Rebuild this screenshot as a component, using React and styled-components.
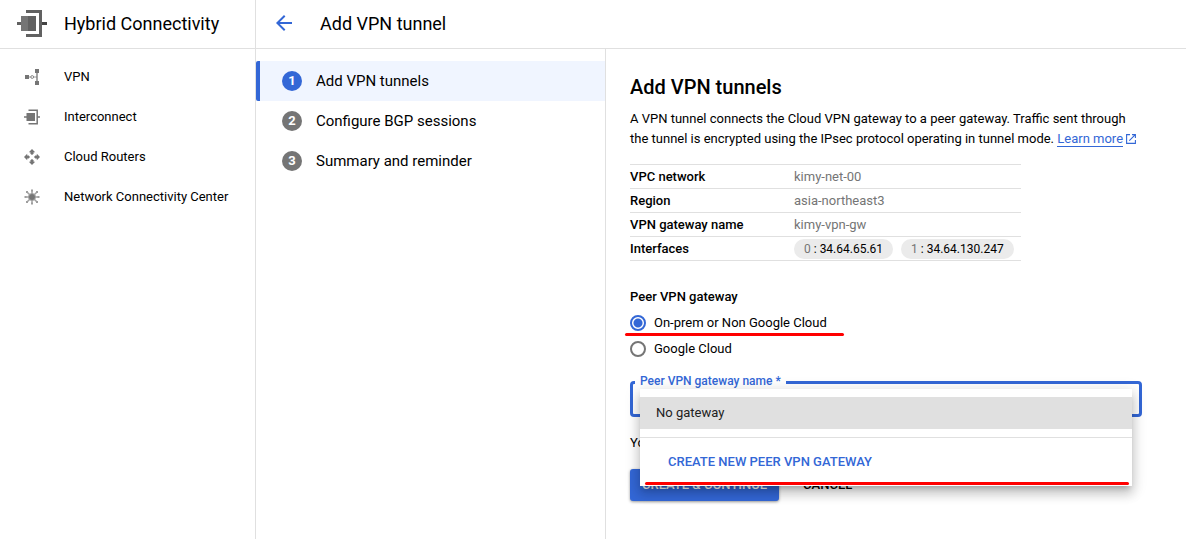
import React, { useState } from "react";
import styled, { createGlobalStyle, css } from "styled-components";

const color = {
  blue: "#3367d6",
  grey: "#757575",
  line: "#e0e0e0",
  text: "#000",
  option: "#212121",
  mark: "#ff0000",
};

const GlobalStyle = createGlobalStyle`
  *, *::before, *::after { box-sizing: border-box; }
  body {
    margin: 0;
    background: #fff;
    color: #000;
    font-family: Roboto, "Liberation Sans", sans-serif;
    font-size: 13px;
    line-height: 20px;
  }
  button, select, input { font: inherit; margin: 0; }
  h1, h2, p, ul, ol { margin: 0; padding: 0; }
  ul, ol { list-style: none; }
`;

const Page = styled.div`
  display: flex;
  min-height: 100vh;
`;

const Sidebar = styled.aside`
  flex: 0 0 256px;
  border-right: 1px solid ${color.line};
`;

const Content = styled.div`
  flex: 1;
  min-width: 0;
  display: flex;
  flex-direction: column;
`;

const Bar = styled.header`
  display: flex;
  align-items: center;
  gap: ${(p) => p.$gap}px;
  height: 49px;
  padding: 0 16px;
  border-bottom: 1px solid ${color.line};
`;

const BarTitle = styled.h1`
  font-size: 18px;
  font-weight: 400;
  line-height: 24px;
`;

const BackButton = styled.button`
  display: flex;
  padding: 0 0 2px;
  border: 0;
  background: none;
  color: ${color.blue};
  cursor: pointer;
`;

const NavList = styled.ul`
  && { padding-top: 8px; }
`;

const NavLink = styled.a`
  display: flex;
  align-items: center;
  gap: 24px;
  height: 40px;
  padding: 0 24px;
  color: ${color.text};
  text-decoration: none;
`;

const Body = styled.div`
  flex: 1;
  display: flex;
`;

const Steps = styled.ol`
  flex: 0 0 350px;
  && { padding-top: 12px; }
  border-right: 1px solid ${color.line};
`;

const StepButton = styled.button`
  display: flex;
  align-items: center;
  gap: 14px;
  width: 100%;
  height: 40px;
  padding: 0 22px;
  border: 0;
  border-left: 4px solid transparent;
  border-radius: 2px 0 0 2px;
  background: none;
  color: ${color.text};
  font-size: 15px;
  text-align: left;
  ${(p) =>
    p.$active &&
    css`
      border-left-color: ${color.blue};
      background: #f0f5ff;
    `}
`;

const StepNumber = styled.span`
  width: 20px;
  height: 20px;
  border-radius: 50%;
  background: ${(p) => (p.$active ? color.blue : color.grey)};
  color: #fff;
  font-size: 13px;
  font-weight: 700;
  line-height: 20px;
  text-align: center;
`;

const Main = styled.main`
  flex: 1;
  min-width: 0;
  padding: 24px;
`;

const Form = styled.form`
  max-width: 512px;
`;

const Heading = styled.h2`
  font-size: 20px;
  font-weight: 500;
  line-height: 28px;
`;

const Intro = styled.p`
  && { margin: 8px 0 15px; }
  color: ${color.text};
`;

const LearnLink = styled.a`
  margin-right: 3px;
  border-bottom: 1px solid ${color.blue};
  color: ${color.blue};
  text-decoration: none;
  white-space: nowrap;
`;

const ExternalGlyph = styled.svg`
  color: ${color.blue};
  vertical-align: -1px;
`;

const Details = styled.table`
  width: 100%;
  max-width: 391px;
  border-collapse: collapse;
  border-top: 1px solid ${color.line};

  tr { border-bottom: 1px solid ${color.line}; }
  th, td { height: 24px; padding: 0; text-align: left; line-height: 20px; }
  th { width: 164px; font-weight: 500; }
  td { color: ${color.grey}; }
`;

const Chips = styled.div`
  display: flex;
  gap: 8px;
`;

const Chip = styled.span`
  padding: 0 10px;
  border-radius: 10px;
  background: #ebebeb;
  font-size: 12px;
  line-height: 20px;
  white-space: nowrap;

  b { color: #000; font-weight: 400; }
`;

const Group = styled.fieldset`
  margin: 26px 0 0;
  padding: 0;
  border: 0;
`;

const Legend = styled.legend`
  padding: 0;
  font-weight: 500;
`;

const RadioRow = styled.div`
  position: relative;
  width: max-content;
  margin-top: 6px;
`;

const RadioLabel = styled.label`
  display: flex;
  align-items: center;
  gap: 8px;
  color: ${color.text};
`;

const Radio = styled.input`
  appearance: none;
  width: 16px;
  height: 16px;
  border: 2px solid ${color.grey};
  border-radius: 50%;

  &:checked {
    border-color: ${color.blue};
    background: radial-gradient(circle, ${color.blue} 4px, transparent 5px);
  }
`;

const RadioMark = styled.span`
  position: absolute;
  right: -17px;
  bottom: -3px;
  left: -5px;
  height: 3px;
  border-radius: 2px;
  background: ${color.mark};
`;

const Field = styled.div`
  position: relative;
  margin-top: 22px;
`;

const FieldLabel = styled.label`
  position: absolute;
  top: -10px;
  left: 5px;
  padding: 0 5px;
  background: #fff;
  color: ${color.blue};
  font-size: 12px;
  font-weight: 500;
`;

const Select = styled.select`
  display: block;
  appearance: none;
  width: 100%;
  height: 36px;
  padding: 0 12px;
  border: 3px solid ${color.blue};
  border-radius: 4px;
  background: #fff;
  outline: 0;
`;

const Menu = styled.div`
  position: absolute;
  z-index: 1;
  top: 8px;
  right: 10px;
  left: 10px;
  padding-top: 8px;
  background: #fff;
  box-shadow: 0 5px 5px -3px rgba(0, 0, 0, 0.2),
    0 8px 10px 1px rgba(0, 0, 0, 0.14), 0 3px 14px 2px rgba(0, 0, 0, 0.12);
`;

const Option = styled.button`
  display: block;
  width: 100%;
  height: 32px;
  padding: 0 16px;
  border: 0;
  background: #e0e0e0;
  color: ${color.option};
  text-align: left;
`;

const CreateOption = styled.button`
  display: block;
  width: 100%;
  height: 49px;
  margin-top: 8px;
  padding: 0 28px;
  border: 0;
  border-top: 1px solid ${color.line};
  background: #fff;
  color: ${color.blue};
  font-weight: 500;
  text-align: left;
`;

const MenuMark = styled.span`
  position: absolute;
  right: 3px;
  bottom: 1px;
  left: 5px;
  height: 3px;
  border-radius: 2px;
  background: ${color.mark};
`;

const Hint = styled.p`
  && { margin: 16px 0; }
  color: ${color.text};
`;

const Actions = styled.div`
  display: flex;
  gap: 8px;
`;

const Button = styled.button`
  height: 32px;
  padding: 0 ${(p) => (p.$primary ? 12 : 16)}px;
  border: 0;
  border-radius: 3px;
  background: none;
  color: #000;
  font-weight: 500;
  ${(p) =>
    p.$primary &&
    css`
      background: ${color.blue};
      color: #fff;
      box-shadow: 0 1px 3px rgba(0, 0, 0, 0.4);
    `}
`;

const ProductIcon = () => (
  <svg width="32" height="32" viewBox="0 0 32 32" aria-hidden="true">
    <path fill="#616161" d="M10 2h16v27H10v-3h13V5H10z" />
    <path fill="#757575" d="M5 8h8v15H5z" />
    <path fill="#616161" d="M12 8h8v15h-8zM1 14h4v3H1z" />
    <path fill="#424242" d="M26 14h5v3h-5z" />
  </svg>
);

const VpnIcon = () => (
  <svg width="16" height="16" viewBox="0 0 16 16" aria-hidden="true">
    <path fill="#757575" d="M1 6h4v4H1zM11 0h4v4h-4zM11 12h4v4h-4z" />
    <path fill="none" stroke="#9e9e9e" d="M5 8h2M9.500 8H13" />
    <path fill="none" stroke="#757575" strokeWidth="1.300" d="M13 4v8" />
    <circle cx="8.200" cy="8" r="1.400" fill="#fff" stroke="#858585" />
  </svg>
);

const InterconnectIcon = () => (
  <svg width="16" height="16" viewBox="0 0 16 16" aria-hidden="true">
    <path fill="#757575" d="M2.500 4H11v8H2.500zM0 7.300h3v1.400H0zM13 7.300h3v1.400h-3z" />
    <path fill="none" stroke="#757575" strokeWidth="1.500" d="M4.500 1.200h8.700v13.500H4.500" />
  </svg>
);

const RoutersIcon = () => (
  <svg width="16" height="16" viewBox="0 0 16 16" aria-hidden="true">
    <g fill="#757575">
      {[0, 90, 180, 270].map((angle) => (
        <path
          key={angle}
          transform={`rotate(${angle} 8 8)`}
          d="M8 0l3.200 3.200H9.600v1.500L8 6 6.400 4.700V3.200H4.800z"
        />
      ))}
    </g>
  </svg>
);

const CenterIcon = () => (
  <svg width="16" height="16" viewBox="0 0 16 16" aria-hidden="true">
    <g stroke="#a3a3a3" strokeWidth="1.500">
      <path d="M8 1v14M1 8h14M3 3l10 10M13 3L3 13" />
    </g>
    <g fill="#9e9e9e">
      <path d="M7 0.500h2v2H7zM7 13.500h2v2H7zM.5 7h2v2h-2zM13.500 7h2v2h-2z" />
      <path d="M2 2h2v2H2zM12 2h2v2h-2zM2 12h2v2H2zM12 12h2v2h-2z" />
    </g>
    <circle cx="8" cy="8" r="3.500" fill="#757575" stroke="#a3a3a3" />
  </svg>
);

const BackIcon = () => (
  <svg width="24" height="24" viewBox="0 0 24 24" aria-hidden="true">
    <path fill="currentColor" d="M20 11H7.830l5.590-5.590L12 4l-8 8 8 8 1.410-1.410L7.830 13H20z" />
  </svg>
);

const ExternalIcon = () => (
  <ExternalGlyph width="10" height="10" viewBox="0 0 10 10" aria-hidden="true">
    <path fill="none" stroke="currentColor" strokeWidth="1.100" d="M4 .6H.6v8.800h8.800V6M6 .6h3.400V4M9.300.7L3.300 6.700" />
  </ExternalGlyph>
);

const navItems = [
  ["VPN", VpnIcon],
  ["Interconnect", InterconnectIcon],
  ["Cloud Routers", RoutersIcon],
  ["Network Connectivity Center", CenterIcon],
];

const steps = ["Add VPN tunnels", "Configure BGP sessions", "Summary and reminder"];

const details = [
  ["VPC network", "kimy-net-00"],
  ["Region", "asia-northeast3"],
  ["VPN gateway name", "kimy-vpn-gw"],
];

const interfaces = ["34.64.65.61", "34.64.130.247"];

const peerTypes = ["On-prem or Non Google Cloud", "Google Cloud"];

export default function App() {
  const [peerType, setPeerType] = useState(peerTypes[0]);

  return (
    <>
      <GlobalStyle />
      <Page>
        <Sidebar>
          <Bar as="div" $gap={16}>
            <ProductIcon />
            <BarTitle as="div">Hybrid Connectivity</BarTitle>
          </Bar>
          <nav>
            <NavList>
              {navItems.map(([name, Icon]) => (
                <li key={name}>
                  <NavLink href="#">
                    <Icon />
                    {name}
                  </NavLink>
                </li>
              ))}
            </NavList>
          </nav>
        </Sidebar>
        <Content>
          <Bar $gap={24}>
            <BackButton type="button" aria-label="Back">
              <BackIcon />
            </BackButton>
            <BarTitle>Add VPN tunnel</BarTitle>
          </Bar>
          <Body>
            <Steps>
              {steps.map((name, i) => (
                <li key={name}>
                  <StepButton type="button" $active={i === 0}>
                    <StepNumber $active={i === 0}>{i + 1}</StepNumber>
                    {name}
                  </StepButton>
                </li>
              ))}
            </Steps>
            <Main>
              <Form onSubmit={(e) => e.preventDefault()}>
                <Heading>Add VPN tunnels</Heading>
                <Intro>
                  A VPN tunnel connects the Cloud VPN gateway to a peer gateway. Traffic sent
                  through the tunnel is encrypted using the IPsec protocol operating in tunnel
                  mode. <LearnLink href="#">Learn more</LearnLink>
                  <ExternalIcon />
                </Intro>
                <Details>
                  <tbody>
                    {details.map(([name, value]) => (
                      <tr key={name}>
                        <th scope="row">{name}</th>
                        <td>{value}</td>
                      </tr>
                    ))}
                    <tr>
                      <th scope="row">Interfaces</th>
                      <td>
                        <Chips>
                          {interfaces.map((ip, i) => (
                            <Chip key={ip}>
                              {i} <b>: {ip}</b>
                            </Chip>
                          ))}
                        </Chips>
                      </td>
                    </tr>
                  </tbody>
                </Details>
                <Group>
                  <Legend>Peer VPN gateway</Legend>
                  {peerTypes.map((name, i) => (
                    <RadioRow key={name}>
                      <RadioLabel>
                        <Radio
                          type="radio"
                          name="peer"
                          checked={peerType === name}
                          onChange={() => setPeerType(name)}
                        />
                        {name}
                      </RadioLabel>
                      {i === 0 && <RadioMark />}
                    </RadioRow>
                  ))}
                </Group>
                <Field>
                  <Select id="gateway" />
                  <FieldLabel htmlFor="gateway">Peer VPN gateway name *</FieldLabel>
                  <Menu>
                    <Option type="button">No gateway</Option>
                    <CreateOption type="button">CREATE NEW PEER VPN GATEWAY</CreateOption>
                    <MenuMark />
                  </Menu>
                </Field>
                <Hint>You</Hint>
                <Actions>
                  <Button $primary>CREATE &amp; CONTINUE</Button>
                  <Button type="button">CANCEL</Button>
                </Actions>
              </Form>
            </Main>
          </Body>
        </Content>
      </Page>
    </>
  );
}
